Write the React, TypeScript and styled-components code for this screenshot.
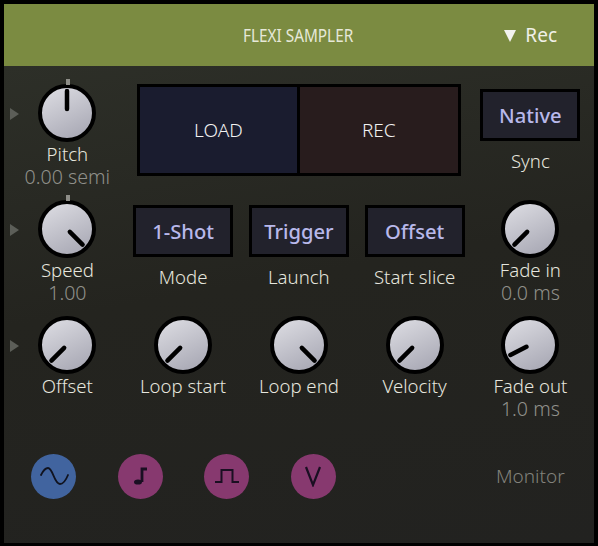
import React, { useId } from 'react';
import styled, { createGlobalStyle } from 'styled-components';

const Global = createGlobalStyle`
  html, body { margin: 0; padding: 0; background: #000; }
  body { font-family: "Noto Sans", "Open Sans", sans-serif; font-weight: 300; }
`;

function Knob({ angle }: { angle: number }) {
  const id = useId();
  return (
    <svg width="58" height="58" viewBox="0 0 58 58">
      <defs>
        <linearGradient id={id} x1="0.2" y1="0" x2="0.7" y2="1">
          <stop offset="0" stopColor="#dcdce2" />
          <stop offset="1" stopColor="#a8a8b4" />
        </linearGradient>
      </defs>
      <circle cx="29" cy="29" r="27" fill={`url(#${id})`} stroke="#000" strokeWidth="4" />
      <line x1="29" y1="7" x2="29" y2="25" stroke="#000" strokeWidth="4.5" strokeLinecap="round" transform={`rotate(${angle} 29 29)`} />
    </svg>
  );
}

function KnobCell({ name, value, angle, tick, arrow }: { name: string; value?: string; angle: number; tick?: boolean; arrow?: boolean }) {
  return (
    <Cell>
      {arrow && <Arrow />}
      {tick && <Tick />}
      <Knob angle={angle} />
      <KnobName>{name}</KnobName>
      {value && <KnobValue>{value}</KnobValue>}
    </Cell>
  );
}

function ToggleCell({ text, name }: { text: string; name: string }) {
  return (
    <ToggleWrap>
      <Toggle>{text}</Toggle>
      <ToggleName>{name}</ToggleName>
    </ToggleWrap>
  );
}

export default function App() {
  return (
    <>
      <Global />
      <Frame>
        <Header>
          <Title>FLEXI SAMPLER</Title>
          <RecMenu>
            <DownArrow />
            Rec
          </RecMenu>
        </Header>
        <Body>
          <Grid>
            <KnobCell name="Pitch" value="0.00 semi" angle={0} tick arrow />
            <BigButtons>
              <BigButton $bg="#1a1c2f">LOAD</BigButton>
              <BigButton $bg="#281c1d">REC</BigButton>
            </BigButtons>
            <ToggleCell text="Native" name="Sync" />

            <KnobCell name="Speed" value="1.00" angle={135} tick arrow />
            <ToggleCell text="1-Shot" name="Mode" />
            <ToggleCell text="Trigger" name="Launch" />
            <ToggleCell text="Offset" name="Start slice" />
            <KnobCell name="Fade in" value="0.0 ms" angle={225} />

            <KnobCell name="Offset" angle={225} arrow />
            <KnobCell name="Loop start" angle={225} />
            <KnobCell name="Loop end" angle={135} />
            <KnobCell name="Velocity" angle={225} />
            <KnobCell name="Fade out" value="1.0 ms" angle={243} />
          </Grid>
          <Footer>
            <Round $bg="#41649f">
              <svg width="30" height="20" viewBox="0 0 30 20" fill="none" stroke="#10131f" strokeWidth="1.8" strokeLinecap="round">
                <path d="M2 9 C4 5 6 2 9 2 C14 2 15 18 21 18 C24 18 27 14 29 9" />
              </svg>
            </Round>
            <Round $bg="#87396f">
              <svg width="20" height="24" viewBox="0 0 20 24" fill="#1a0f22" stroke="#1a0f22">
                <ellipse cx="8" cy="18" rx="4" ry="2.6" stroke="none" />
                <path d="M12 18 V5 H17" fill="none" strokeWidth="2.8" />
              </svg>
            </Round>
            <Round $bg="#87396f">
              <svg width="26" height="20" viewBox="0 0 26 20" fill="none" stroke="#1a0f22" strokeWidth="2">
                <path d="M1 16 H7.5 V4 H18.5 V16 H25" />
              </svg>
            </Round>
            <Round $bg="#87396f">
              <svg width="18" height="22" viewBox="0 0 18 22" fill="none" stroke="#1a0f22" strokeWidth="2.2">
                <path d="M2 2 L9 20 L16 2" />
              </svg>
            </Round>
            <Monitor>Monitor</Monitor>
          </Footer>
        </Body>
      </Frame>
    </>
  );
}

const Frame = styled.div`
  width: 590px;
  height: 539px;
  margin: 4px 4px 3px;
  display: flex;
  flex-direction: column;
  overflow: hidden;
`;

const Header = styled.header`
  height: 62px;
  flex: none;
  background: #7b8b41;
  display: flex;
  align-items: center;
  justify-content: center;
  position: relative;
  color: #e6e8d8;
`;

const Title = styled.div`
  font-size: 18.7px;
  font-weight: 400;
  transform: scaleX(0.82);
  margin-top: -2px;
  margin-left: -1px;
`;

const RecMenu = styled.div`
  position: absolute;
  right: 37px;
  top: 20px;
  display: flex;
  align-items: center;
  gap: 9px;
  font-size: 19px;
  font-weight: 400;
  line-height: 23px;
  color: #f0f0e8;
`;

const DownArrow = styled.span`
  width: 0;
  height: 0;
  border-left: 6px solid transparent;
  border-right: 6px solid transparent;
  border-top: 12px solid #f2f2ee;
`;

const Body = styled.main`
  flex: 1;
  padding: 13px 5px 0 5.5px;
  background: linear-gradient(170deg, #2d2f28 0%, #24241f 45%, #222220 100%);
`;

const Grid = styled.div`
  display: grid;
  grid-template-columns: repeat(5, 115.75px);
  grid-auto-rows: 116px;
`;

const Cell = styled.div`
  position: relative;
  display: flex;
  flex-direction: column;
  align-items: center;
  padding-top: 5px;
`;

const ToggleWrap = styled(Cell)`
  padding-top: 10px;
`;

const Tick = styled.span`
  position: absolute;
  top: 0;
  left: 56px;
  width: 4px;
  height: 6px;
  background: #8e8e88;
`;

const Arrow = styled.span`
  position: absolute;
  left: 0.5px;
  top: 29px;
  width: 0;
  height: 0;
  border-top: 6px solid transparent;
  border-bottom: 6px solid transparent;
  border-left: 9px solid #5c5e58;
`;

const KnobName = styled.div`
  color: #e6e6de;
  font-size: 18.6px;
  line-height: 22px;
  margin-top: 1px;
`;

const KnobValue = styled.div`
  color: #90908a;
  font-size: 19.6px;
  line-height: 23px;
`;

const BigButtons = styled.div`
  grid-column: span 3;
  display: flex;
  margin: 5px 12px 0 11.5px;
  height: 92px;
`;

const BigButton = styled.div<{ $bg: string }>`
  flex: 1;
  background: ${(p) => p.$bg};
  border: 3px solid #000;
  color: #f2f2f2;
  font-size: 19px;
  display: flex;
  align-items: center;
  justify-content: center;
  & + & {
    margin-left: -3px;
  }
`;

const Toggle = styled.div`
  box-sizing: border-box;
  width: 100px;
  height: 52px;
  background: #22222c;
  border: 3px solid #000;
  color: #b8b8ea;
  font-size: 20.2px;
  font-weight: 500;
  display: flex;
  align-items: center;
  justify-content: center;
`;

const ToggleName = styled(KnobName)`
  margin-top: 9px;
`;

const Footer = styled.div`
  display: flex;
  align-items: center;
  margin-top: 26px;
  padding-left: 21.5px;
  height: 46px;
`;

const Round = styled.div<{ $bg: string }>`
  width: 45px;
  height: 45px;
  border-radius: 50%;
  background: ${(p) => p.$bg};
  display: flex;
  align-items: center;
  justify-content: center;
  margin-right: 41.5px;
`;

const Monitor = styled.div`
  color: #82827c;
  font-size: 19px;
  margin-left: 119px;
`;
